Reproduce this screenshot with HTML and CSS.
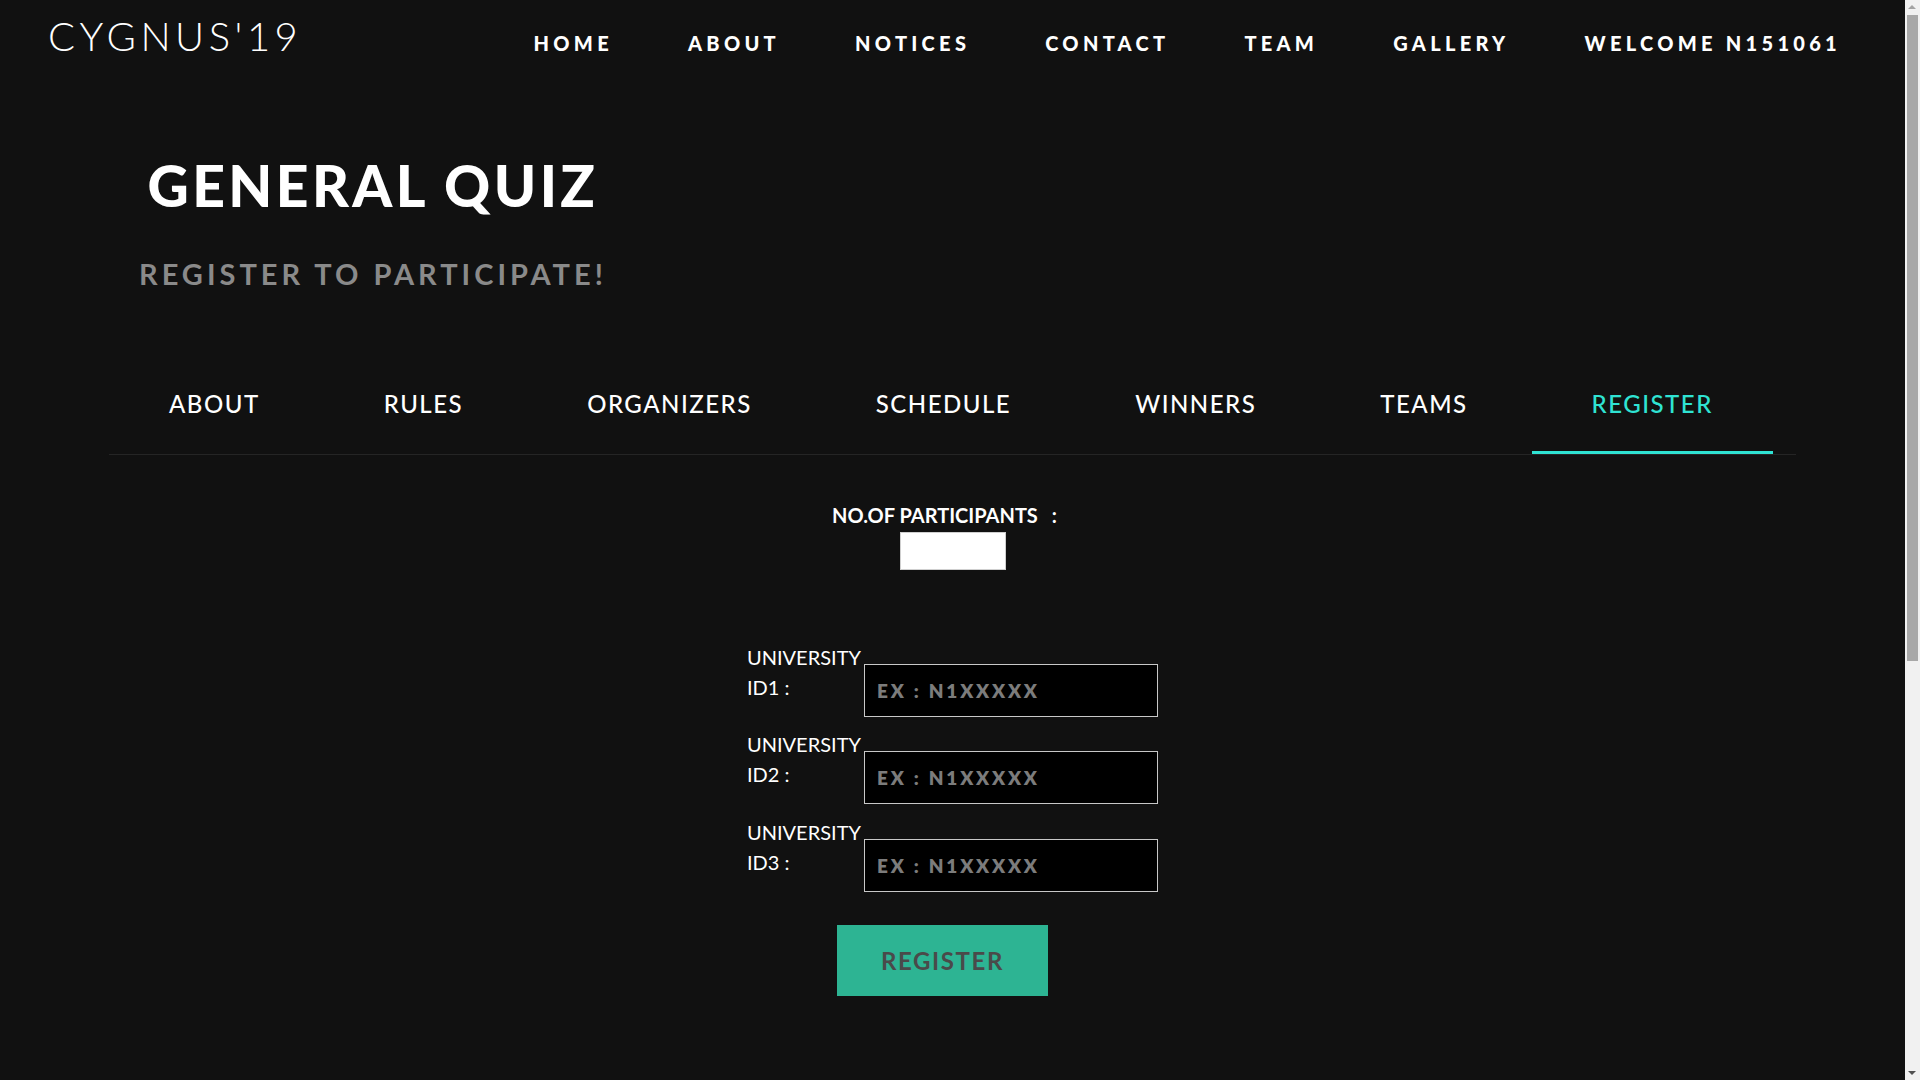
FILE: index.html
```html
<!DOCTYPE html>
<html lang="en">
<head>
<meta charset="utf-8">
<title>Cygnus'19 - General Quiz</title>
<link rel="stylesheet" href="styles.css">
</head>
<body>
<div class="site">
  <header class="topbar">
    <div class="logo">CYGNUS'19</div>
    <nav class="mainnav">
      <a class="navlink">HOME</a>
      <a class="navlink">ABOUT</a>
      <a class="navlink">NOTICES</a>
      <a class="navlink">CONTACT</a>
      <a class="navlink">TEAM</a>
      <a class="navlink">GALLERY</a>
      <a class="navlink">WELCOME N151061</a>
    </nav>
  </header>
  <main class="page">
    <section class="hero">
      <h1 class="hero-title">GENERAL QUIZ</h1>
      <p class="hero-sub">REGISTER TO PARTICIPATE!</p>
    </section>
    <div class="tabs">
      <a class="tab">ABOUT</a>
      <a class="tab">RULES</a>
      <a class="tab">ORGANIZERS</a>
      <a class="tab">SCHEDULE</a>
      <a class="tab">WINNERS</a>
      <a class="tab">TEAMS</a>
      <a class="tab active">REGISTER</a>
    </div>
    <form class="regform">
      <div class="count-label">NO.OF PARTICIPANTS<span class="colon">:</span></div>
      <input class="count-input" type="text">
      <div class="rows">
        <div class="row">
          <label class="idlabel">UNIVERSITY ID1 :</label>
          <input class="idinput" type="text" placeholder="EX : N1XXXXX">
        </div>
        <div class="row">
          <label class="idlabel">UNIVERSITY ID2 :</label>
          <input class="idinput" type="text" placeholder="EX : N1XXXXX">
        </div>
        <div class="row">
          <label class="idlabel">UNIVERSITY ID3 :</label>
          <input class="idinput" type="text" placeholder="EX : N1XXXXX">
        </div>
      </div>
      <button class="submit" type="button">REGISTER</button>
    </form>
  </main>
</div>
<div class="scrollbar" aria-hidden="true">
  <span class="sb-up"></span>
  <span class="sb-thumb"></span>
  <span class="sb-down"></span>
</div>
</body>
</html>
```
FILE: styles.css
```css
* { box-sizing: border-box; }
html, body { margin: 0; padding: 0; }
body {
  background: #111111;
  color: #ffffff;
  font-family: "Lato", "Liberation Sans", sans-serif;
}
.site {
  width: 1905px;
  padding-bottom: 700px;
}
.topbar {
  display: flex;
  align-items: baseline;
  padding: 12px 0 0 48px;
}
.logo {
  font-weight: 300;
  font-size: 40px;
  line-height: 1.2;
  letter-spacing: 4.5px;
  color: #fff;
}
.mainnav {
  display: flex;
  align-items: baseline;
  margin-left: auto;
  margin-right: 64px;
  gap: 75px;
  padding-top: 1px;
}
.navlink {
  font-weight: 900;
  font-size: 20px;
  letter-spacing: 4.3px;
  color: #fff;
}
.hero {
  display: inline-flex;
  flex-direction: column;
  align-items: center;
  margin-left: 139px;
  margin-top: 91px;
}
.hero-title {
  margin: 0;
  font-weight: 900;
  font-size: 57px;
  line-height: 1.2;
  letter-spacing: 3.4px;
  color: #fff;
}
.hero-sub {
  margin: 38px 0 0 0;
  font-weight: 700;
  font-size: 29px;
  line-height: 1.2;
  letter-spacing: 4px;
  color: #8a8a8a;
}
.tabs {
  display: flex;
  gap: 4px;
  margin: 78px 0 0 109px;
  width: 1687px;
  border-bottom: 1px solid #252525;
}
.tab {
  padding: 20px 60px 32px;
  font-weight: 500;
  font-size: 24px;
  line-height: 1.2;
  letter-spacing: 1.5px;
  color: #fff;
  border-bottom: 3px solid transparent;
}
.tab.active {
  color: #2fe3d3;
  border-bottom-color: #2fe3d3;
}
.regform {
  display: flex;
  flex-direction: column;
  align-items: center;
  padding-top: 48px;
}
.count-label {
  font-weight: 700;
  font-size: 20px;
  line-height: 1.2;
  color: #fff;
  margin-right: 16px;
}
.colon { margin-left: 14px; }
.count-input {
  margin-top: 5px;
  width: 106px;
  height: 38px;
  background: #fff;
  border: 1px solid #cfcfcf;
}
.rows {
  margin-top: 72px;
  display: flex;
  flex-direction: column;
  gap: 12.5px;
}
.row {
  display: flex;
  align-items: flex-start;
}
.idlabel {
  width: 117px;
  font-size: 20px;
  line-height: 30px;
  color: #fff;
}
.idinput {
  margin-top: 22px;
  width: 294px;
  height: 53px;
  background: #000;
  border: 1px solid #c8c8c8;
  padding: 0 12px;
  font-family: "Lato", sans-serif;
  font-weight: 700;
  font-size: 19px;
  letter-spacing: 2.8px;
  color: #fff;
}
.idinput::placeholder {
  color: #7c7c7c;
  font-weight: 800;
}
.submit {
  margin-top: 33px;
  margin-right: 20px;
  width: 211px;
  height: 71px;
  background: #2db493;
  border: none;
  font-family: "Lato", sans-serif;
  font-weight: 700;
  font-size: 24px;
  letter-spacing: 1.6px;
  color: #4a4a4a;
}
.scrollbar {
  position: fixed;
  top: 0;
  right: 0;
  width: 15px;
  height: 100vh;
  background: #f1f1f1;
}
.sb-thumb {
  position: absolute;
  left: 2px;
  top: 15px;
  width: 11px;
  height: 646px;
  background: #a8a8a8;
}
.sb-up, .sb-down {
  position: absolute;
  left: 3px;
  width: 0;
  height: 0;
  border-left: 4.5px solid transparent;
  border-right: 4.5px solid transparent;
}
.sb-up {
  top: 5px;
  border-bottom: 4.5px solid #a3a3a3;
}
.sb-down {
  bottom: 5px;
  border-top: 4.5px solid #505050;
}
```
